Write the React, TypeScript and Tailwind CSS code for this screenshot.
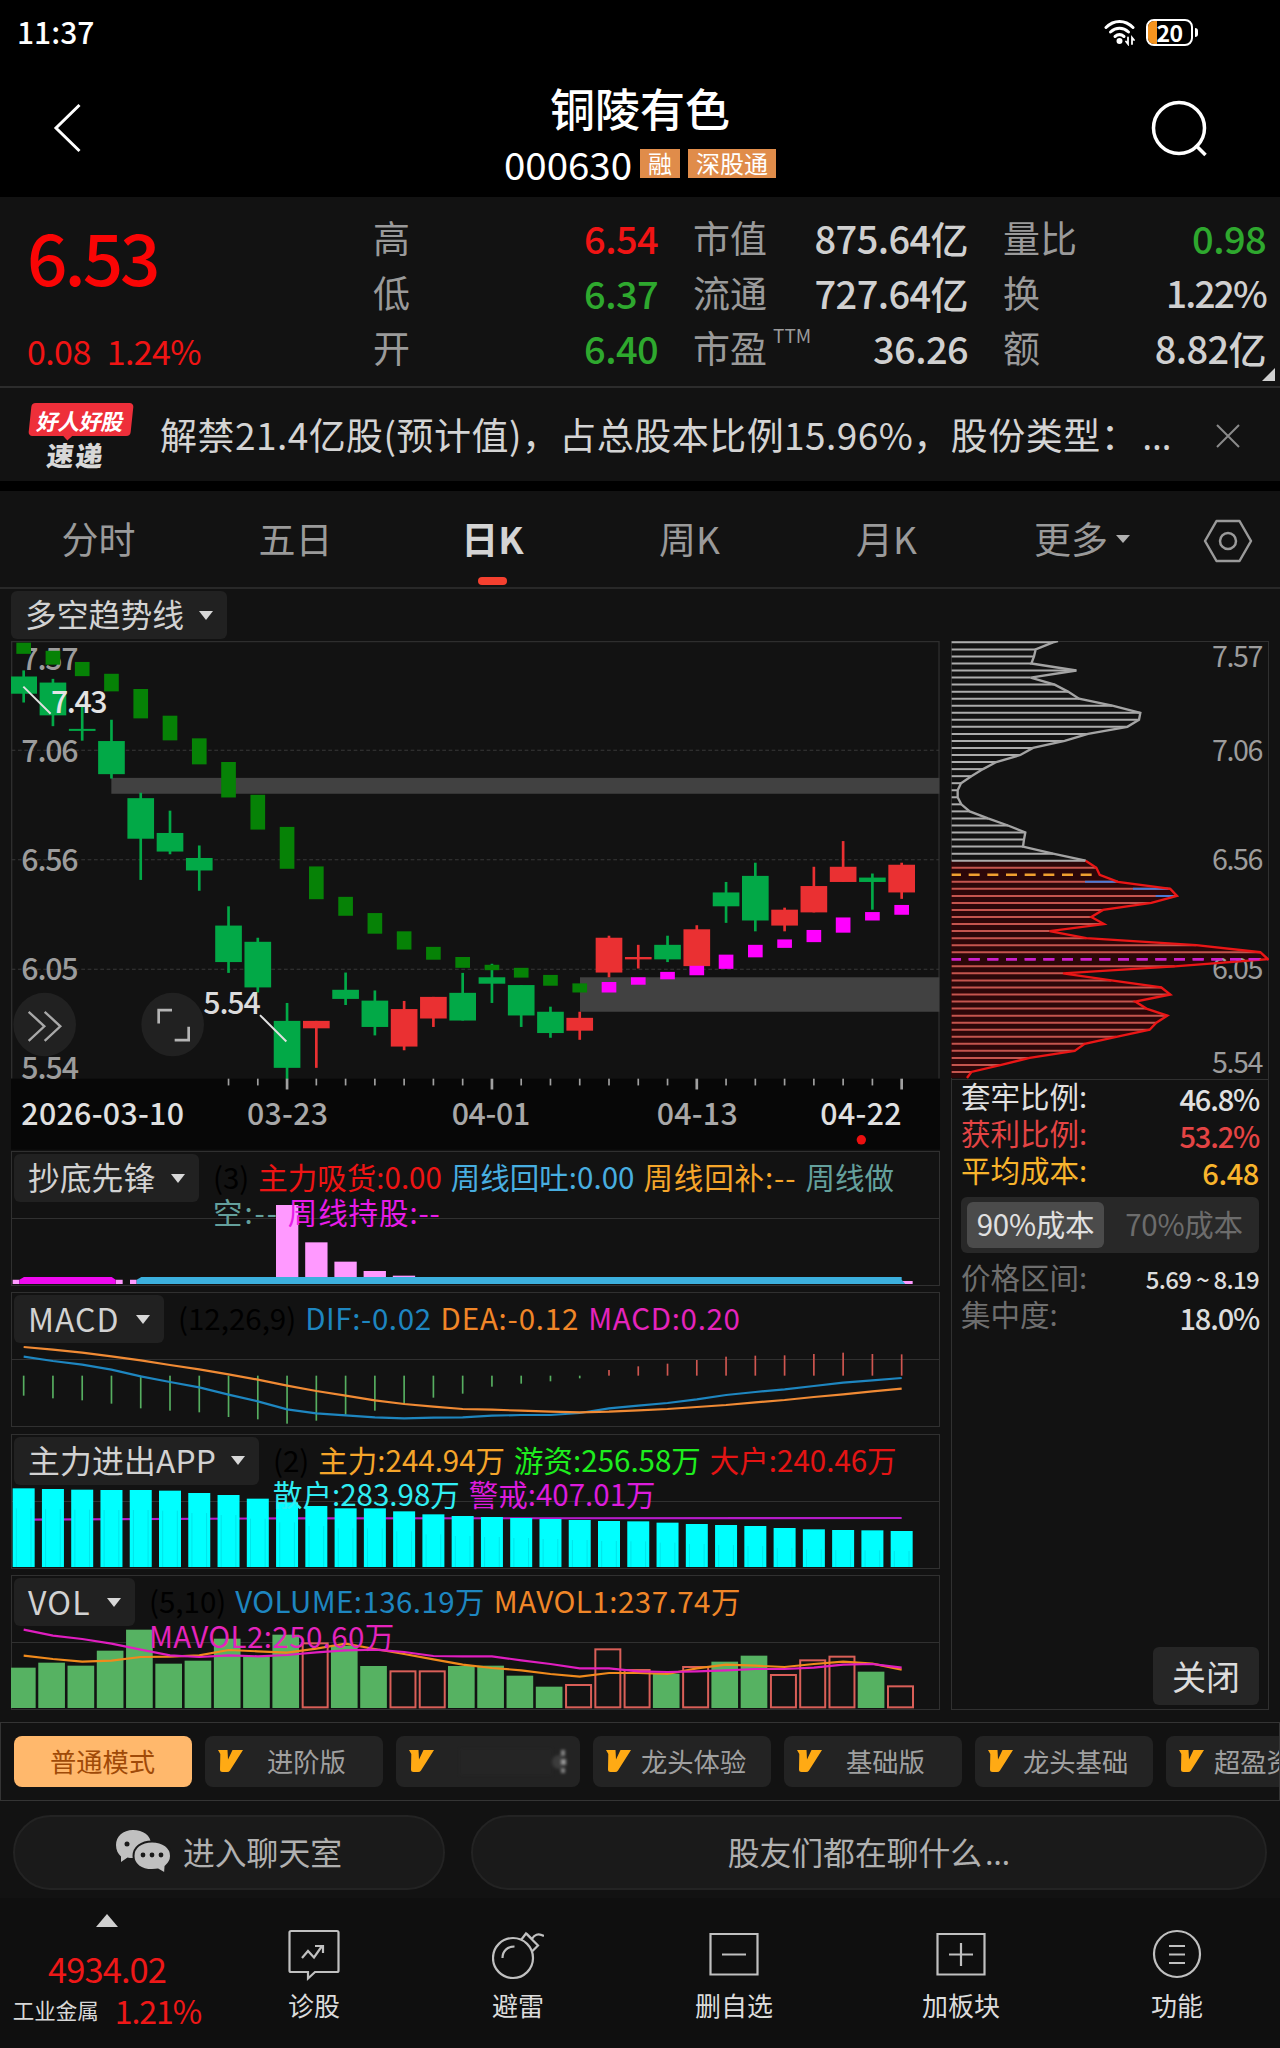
import React from 'react';
import clsx from 'clsx';

// All chart data below is in device units (about 3 units = 1 css pixel).
const COLS = 31;
const colX = (i: number) => 71 + i * 87.8;

type Candle = [string, number, number, number, number];

// [direction, high, body top, body bottom, low]
const CANDLES: Candle[] = [
  ['g', 120, 138, 189, 215],
  ['g', 145, 156, 253, 285],
  ['g', 220, 293, 299, 328],
  ['g', 266, 329, 427, 440],
  ['g', 482, 498, 618, 740],
  ['g', 535, 601, 656, 664],
  ['g', 638, 675, 712, 772],
  ['g', 818, 875, 983, 1015],
  ['g', 911, 923, 1058, 1073],
  ['g', 1104, 1157, 1296, 1330],
  ['r', 1157, 1157, 1179, 1296],
  ['g', 1014, 1065, 1092, 1110],
  ['g', 1067, 1097, 1175, 1200],
  ['r', 1098, 1122, 1233, 1244],
  ['r', 1086, 1086, 1150, 1175],
  ['g', 1015, 1074, 1156, 1156],
  ['g', 988, 1028, 1047, 1104],
  ['g', 1051, 1051, 1141, 1175],
  ['g', 1115, 1130, 1193, 1207],
  ['r', 1130, 1148, 1186, 1213],
  ['r', 905, 911, 1014, 1028],
  ['r', 932, 968, 975, 1002],
  ['g', 905, 932, 975, 983],
  ['r', 874, 886, 995, 995],
  ['g', 746, 777, 818, 867],
  ['g', 689, 728, 860, 892],
  ['r', 822, 828, 875, 892],
  ['r', 701, 758, 836, 836],
  ['r', 625, 701, 746, 746],
  ['g', 721, 733, 746, 828],
  ['r', 689, 695, 777, 796],
];

const TREND = [
  [38, 71], [62, 103], [95, 137], [130, 182], [175, 262], [254, 327], [321, 398], [391, 496],
  [488, 591], [583, 707], [700, 797], [790, 846], [838, 899], [892, 946], [938, 976], [968, 1000],
  [991, 1007], [1000, 1029], [1021, 1053], [1046, 1073], [1042, 1073], [1028, 1050], [1012, 1034],
  [994, 1022], [961, 1003], [932, 969], [916, 941], [888, 924], [851, 896], [835, 860], [814, 843],
];

const DIF = [651, 664, 675, 690, 710, 727, 743, 765, 785, 809, 821, 827, 833, 836, 834, 833, 828, 826, 826, 820, 806, 798, 790, 779, 766, 757, 749, 739, 729, 722, 715];
const DEA = [622, 630, 639, 650, 662, 676, 689, 704, 720, 738, 754, 768, 782, 793, 801, 808, 810, 813, 816, 818, 816, 812, 808, 802, 796, 788, 781, 772, 764, 755, 747];
const MACD = [768, 776, 782, 792, 806, 813, 818, 832, 839, 852, 843, 825, 813, 793, 774, 762, 741, 732, 725, 716, 691, 680, 672, 661, 651, 648, 647, 643, 639, 643, 644];
const FLOW = [205, 207, 209, 210, 210, 212, 219, 225, 236, 247, 258, 265, 265, 274, 283, 288, 291, 294, 297, 300, 303, 304, 308, 312, 315, 318, 324, 328, 330, 331, 333];
const VOLUME = [744, 729, 738, 693, 630, 732, 723, 657, 710, 645, 668, 678, 739, 752, 752, 739, 738, 768, 801, 793, 686, 748, 762, 739, 726, 708, 763, 719, 708, 756, 797];
const VOLUME_UP = [10, 13, 14, 19, 20, 21, 23, 26, 27, 28, 30];
const MAVOL1 = [708, 718, 726, 723, 712, 711, 707, 691, 695, 699, 687, 672, 688, 703, 719, 735, 745, 752, 763, 771, 760, 760, 763, 746, 735, 738, 742, 733, 726, 732, 750];
const MAVOL2 = [630, 648, 658, 672, 690, 707, 712, 707, 710, 706, 698, 692, 690, 697, 709, 710, 710, 722, 733, 746, 746, 755, 757, 755, 752, 748, 748, 744, 735, 733, 744];

const CHIPS = [
  370, 318, 313, 305, 440, 303, 375, 415, 448, 548, 632, 628, 593, 475, 405, 310, 272, 200, 160, 125, 94, 84,
  84, 95, 120, 175, 235, 287, 283, 280, 370, 468, 500, 510, 565, 722, 742, 665, 520, 485, 523, 360, 470, 800,
  992, 1015, 735, 400, 545, 695, 722, 617, 650, 713, 680, 660, 560, 465, 435, 300, 215, 125,
];
const chipY = (i: number) => 68 + i * 21.13;
const SPLIT = 31;

const toPoints = (ys: number[]) => ys.map((y, i) => `${colX(i).toFixed(1)},${y}`).join(' ');

function StatusBar() {
  return (
    <div className="flex h-16 shrink-0 items-center justify-between bg-black pl-[17px] pr-[82px] text-white">
      <span className="-mt-[2px] text-[30px] font-medium leading-[40px]">11:37</span>
      <div className="flex items-center gap-[9px]">
        <svg width="33" height="28" viewBox="0 0 33 28" fill="none" stroke="#fff" strokeWidth="3" strokeLinecap="round">
          <path d="M2 9.500C10 1.500 21 1.500 29 9.500" />
          <path d="M6.500 14C12 9 19 9 24.500 14" />
          <path d="M11 18.500c3-2.500 6-2.500 9 0" />
          <circle cx="15.500" cy="23" r="2" fill="#fff" strokeWidth="2" />
          <path d="M24 19.500v6.500l-2-2.500M28 26v-6.500l2 2.500" strokeWidth="1.800" />
        </svg>
        <div className="flex items-center gap-[2px]">
          <div className="relative flex h-[27px] w-[47px] items-center justify-center rounded-[8px] border-2 border-white">
            <div className="absolute inset-y-0 left-0 w-[9px] rounded-l-[6px] bg-[#f5941f]" />
            <span className="relative text-[23px] font-bold leading-[34px] tracking-tight">20</span>
          </div>
          <div className="h-[9px] w-[3px] rounded-r bg-white" />
        </div>
      </div>
    </div>
  );
}

function Header() {
  return (
    <div className="flex h-[133px] shrink-0 items-start justify-between bg-black text-white">
      <svg className="ml-[51px] mt-[38px]" width="32" height="52" viewBox="0 0 32 52" fill="none" stroke="#fff" strokeWidth="3">
        <path d="M28.500 3 5 26l23.500 23" />
      </svg>
      <div className="ml-[47px] flex flex-col items-center pt-[17px]">
        <h1 className="text-[45px] font-medium leading-[54px]">铜陵有色</h1>
        <div className="flex items-center gap-2">
          <span className="text-[38.500px] leading-[56px]">000630</span>
          <span className="h-[29px] bg-[#e08c4a] px-2 text-[24px] leading-[27px]">融</span>
          <span className="h-[29px] bg-[#e08c4a] px-2 text-[24px] leading-[27px]">深股通</span>
        </div>
      </div>
      <svg className="mr-[70px] mt-[35px]" width="60" height="60" viewBox="0 0 60 60" fill="none" stroke="#fff" strokeWidth="3.500">
        <circle cx="29" cy="29" r="25.500" />
        <path d="m45.500 46 10 10" />
      </svg>
    </div>
  );
}

const GREEN = 'text-[#2ea82e]';
const RED = 'text-[#f01414]';
const LIGHT = 'text-[#d0d0d0]';

function QuoteColumn({ className, rows }: { className: string; rows: [string, string, string][] }) {
  return (
    <div className={clsx('flex flex-col pt-[13px]', className)}>
      {rows.map(([label, value, color]) => (
        <div key={label} className="flex h-[55px] items-center justify-between">
          <span className="relative text-[37px] leading-none text-[#9a9a9a]">
            {label}
            {label === '市盈' && <sup className="absolute -top-[4px] left-full ml-[6px] text-[19px] leading-none">TTM</sup>}
          </span>
          <span className={clsx('font-medium leading-none', value.endsWith('%') ? 'text-[37px] tracking-[-1.800px]' : 'text-[38px] tracking-[-0.600px]', color)}>{value}</span>
        </div>
      ))}
    </div>
  );
}

function Quote() {
  return (
    <div className="relative flex h-[191px] shrink-0 border-b-2 border-[#2c2c2c]">
      <div className={clsx('w-[373px] pl-[27px]', RED)}>
        <div className="pt-[18px] text-[71px] font-medium leading-[80px] tracking-[-3px] text-[#fa0505]">6.53</div>
        <div className="flex gap-4 pt-[36px] text-[34px] leading-[40px] tracking-[-0.600px]">
          <span>0.08</span>
          <span>1.24%</span>
        </div>
      </div>
      <QuoteColumn className="w-[285px]" rows={[['高', '6.54', RED], ['低', '6.37', GREEN], ['开', '6.40', GREEN]]} />
      <QuoteColumn className="ml-[35px] w-[275px]" rows={[['市值', '875.64亿', LIGHT], ['流通', '727.64亿', LIGHT], ['市盈', '36.26', LIGHT]]} />
      <QuoteColumn className="ml-[35px] w-[263px]" rows={[['量比', '0.98', GREEN], ['换', '1.22%', LIGHT], ['额', '8.82亿', LIGHT]]} />
      <svg className="absolute bottom-[5px] right-[5px]" width="13" height="13" viewBox="0 0 13 13">
        <path d="M13 0v13H0z" fill="#d0d0d0" />
      </svg>
    </div>
  );
}

function News() {
  return (
    <div className="flex h-[93px] shrink-0 items-center">
      <div className="ml-[29px] mt-[2px] flex w-[104px] flex-col items-center">
        <div className="relative flex h-[33px] w-[102px] -skew-x-6 items-center justify-center rounded-[4px] bg-[#ee2f3a]">
          <span className="-skew-x-6 text-[22px] font-bold leading-none tracking-[-0.500px] text-white">好人好股</span>
          <span className="absolute -bottom-[3px] left-[36px] size-[7px] rotate-45 bg-[#ee2f3a]" />
        </div>
        <span className="-ml-[10px] mt-[5px] -skew-x-6 text-[27px] font-black leading-[28px] tracking-[2px] text-[#d8d8d8]">速递</span>
      </div>
      <p className="ml-[27px] w-[1018px] whitespace-nowrap text-[37px] leading-none tracking-[0.460px] text-[#d4d4d4]">
        解禁21.4亿股(预计值)，占总股本比例15.96%，股份类型：<span className="ml-[4px] font-['Noto_Sans'] tracking-normal">…</span>
      </p>
      <svg className="ml-[38px] mt-[2px]" width="24" height="24" viewBox="0 0 24 24" stroke="#8a8a8a" strokeWidth="2">
        <path d="m1 1 22 22M23 1 1 23" />
      </svg>
    </div>
  );
}

const TABS = ['分时', '五日', '日K', '周K', '月K'];

function Tabs() {
  return (
    <div className="flex h-[98px] shrink-0 items-stretch border-b-2 border-[#282828] text-[37px] text-[#9a9a9a]">
      {TABS.map((tab) => (
        <div key={tab} className={clsx('relative flex w-[197px] items-center justify-center pb-px', tab === '日K' && 'font-bold text-[#d4d4d4]')}>
          {tab}
          {tab === '日K' && <span className="absolute bottom-[2px] h-[8px] w-[29px] rounded-full bg-[#f5402f]" />}
        </div>
      ))}
      <div className="flex w-[194px] items-center justify-center gap-[8px] pb-px">
        更多
        <svg width="14" height="8" viewBox="0 0 14 8"><path d="M0 0h14L7 8z" fill="#b0b0b0" /></svg>
      </div>
      <div className="flex flex-1 items-center justify-center pr-[3px]">
        <svg className="mt-[3px]" width="50" height="44" viewBox="0 0 50 44" fill="none" stroke="#9a9a9a" strokeWidth="2.500" strokeLinejoin="round">
          <path d="M13.500 2h23L48 22 36.500 42h-23L2 22z" />
          <circle cx="25" cy="22" r="8" />
        </svg>
      </div>
    </div>
  );
}

function Dropdown({ label, className }: { label: string; className: string }) {
  return (
    <div className={clsx('flex h-[48px] shrink-0 items-center justify-between rounded-[6px] bg-[#212121] pl-[14px] pr-[14px] leading-none text-[#d2d2d2]', className)}>
      <span className="-mt-[2px] whitespace-nowrap">{label}</span>
      <svg width="14" height="9" viewBox="0 0 14 9"><path d="M0 0h14L7 9z" fill="#d8d8d8" /></svg>
    </div>
  );
}

function KLine() {
  const label = { fontSize: 91, fill: '#9c9c9c', fontWeight: 500 };
  return (
    <svg className="block h-[510px] w-[929px] shrink-0" viewBox="33 33 2787 1509" preserveAspectRatio="none">
      <path d="M35 1328V35H2817V1328" fill="none" stroke="#2e2e2e" strokeWidth="4" />
      <rect x="33" y="1328" width="2787" height="210" fill="#070707" />
      {[356, 680, 1004].map((y) => (
        <path key={y} d={`M35 ${y}H2817`} stroke="#383838" strokeWidth="3" strokeDasharray="11 8" />
      ))}
      <rect x="334" y="438" width="2484" height="47" fill="#414141" />
      <rect x="1740" y="1028" width="1078" height="102" fill="#414141" />
      <text x="64" y="118" textLength="172" {...label}>7.57</text>
      <text x="64" y="390" textLength="172" {...label}>7.06</text>
      <text x="64" y="713" textLength="172" {...label}>6.56</text>
      <text x="64" y="1037" textLength="172" {...label}>6.05</text>
      {CANDLES.map(([dir, high, top, bottom, low], i) => (
        <g key={i} fill={dir === 'g' ? '#02a947' : '#ea3032'}>
          <rect x={colX(i) - 4} y={high} width="8" height={low - high} />
          <rect x={colX(i) - 40} y={top} width="80" height={bottom - top} />
        </g>
      ))}
      {TREND.map(([top, bottom], i) => (
        <rect key={i} x={colX(i) - 22} y={top} width="44" height={bottom - top} fill={i < 20 ? '#068206' : '#ff00ff'} />
      ))}
      <path d="M70 168 152 248M780 1140l79 78" stroke="#e0e0e0" strokeWidth="6" />
      <text x="153" y="247" textLength="170" fontSize="91" fontWeight="500" fill="#e4e4e4">7.43</text>
      <text x="610" y="1138" textLength="172" fontSize="91" fontWeight="500" fill="#dcdcdc">5.54</text>
      <circle cx="134" cy="1168" r="94" fill="#212121" />
      <circle cx="518" cy="1168" r="94" fill="#212121" />
      <path d="m86 1130 47 43-47 43M134 1130l47 43-47 43" fill="none" stroke="#a8a8a8" strokeWidth="7" />
      <path d="M476 1165v-40h40M566 1174v40h-42" fill="none" stroke="#b4b4b4" strokeWidth="8" />
      <text x="64" y="1328" textLength="173" {...label}>5.54</text>
      {Array.from({ length: COLS - 7 }, (_, k) => k + 7).map((i) => {
        const major = (i - 9) % 7 === 0;
        return <rect key={i} x={colX(i) - (major ? 4 : 2.5)} y="1328" width={major ? 8 : 5} height={major ? 32 : 20} fill="#a0a0a0" />;
      })}
      <g fontSize="91" fontWeight="500" fill="#a8a8a8">
        <text x="64" y="1465" textLength="488" fill="#e0e0e0">2026-03-10</text>
        <text x="741" y="1465" textLength="243">03-23</text>
        <text x="1355" y="1465" textLength="236">04-01</text>
        <text x="1970" y="1465" textLength="243">04-13</text>
        <text x="2461" y="1465" textLength="244" fill="#e0e0e0">04-22</text>
      </g>
      <circle cx="2584" cy="1509" r="14" fill="#ec1010" />
    </svg>
  );
}

type Segment = [string, string];

interface PanelProps {
  label: string;
  chip: string;
  lines: Segment[][];
  viewBox: string;
  children: React.ReactNode;
}

function Panel({ label, chip, lines, viewBox, children }: PanelProps) {
  return (
    <div className="relative h-[135px] w-[929px] shrink-0 border border-[#303030]">
      <div className="absolute inset-x-0 top-[66px] h-px bg-[#303030]" />
      <svg className="absolute -left-px -top-px h-[135px] w-[929px]" viewBox={viewBox}>{children}</svg>
      <div className="relative flex pl-[2px] pt-[2px]">
        <Dropdown label={label} className={chip} />
        <div className="ml-[14px] pt-[5px] text-[29.500px] leading-[34.500px]">
          {lines.map((segments, i) => (
            <div key={i} className="flex gap-[9px] whitespace-nowrap">
              {segments.map(([text, color]) => (
                <span key={text} className={color}>{text}</span>
              ))}
            </div>
          ))}
        </div>
      </div>
    </div>
  );
}

function Indicators() {
  return (
    <div className="flex flex-col gap-[6.400px]">
      <Panel
        label="抄底先锋"
        chip="w-[185px] text-[31.800px]"
        viewBox="33 33 2787 405"
        lines={[
          [['(3)', 'text-black'], ['主力吸货:0.00', 'text-[#ee1414]'], ['周线回吐:0.00', 'text-[#48aee0]'], ['周线回补:--', 'text-[#f5a52a] tracking-[0.900px]'], ['周线做', 'text-[#64a09c]']],
          [['空:--', 'text-[#64a09c] tracking-[1.900px]'], ['周线持股:--', 'text-[#e81ce8] tracking-[0.900px]']],
        ]}
      >
        {[195, 307, 365, 393, 407].map((y, i) => (
          <rect key={y} x={828 + i * 87.6} y={y} width="67" height={415 - y} fill="#ff99ff" />
        ))}
        <path d="M38 419H58V432H38zM347 419h21v13h-21zM390 419h20v13h-20zM2705 423h33v9h-33z" fill="#ff99ff" />
        <path d="M58 419 72 411H335L347 419V432H58z" fill="#f00af0" />
        <path d="M410 419 424 411H2705V419L2716 432H410z" fill="#3cb0de" />
      </Panel>
      <Panel
        label="MACD"
        chip="w-[150px] text-[32px] tracking-[1px]"
        viewBox="33 457 2787 405"
        lines={[
          [['(12,26,9)', 'text-black'], ['DIF:-0.02', 'text-[#1e86c0] tracking-[0.600px]'], ['DEA:-0.12', 'text-[#f08628] tracking-[0.800px]'], ['MACD:0.20', 'text-[#e424bc] tracking-[0.700px]']],
        ]}
      >
        {MACD.map((y, i) => (
          <rect key={i} x={colX(i) - 2.5} y={Math.min(y, 708)} width="5" height={Math.abs(y - 708)} fill={y > 708 ? '#56ae60' : '#cf5650'} />
        ))}
        <polyline points={toPoints(DIF)} fill="none" stroke="#1e86c0" strokeWidth="6.500" />
        <polyline points={toPoints(DEA)} fill="none" stroke="#f08a34" strokeWidth="6.500" />
      </Panel>
      <Panel
        label="主力进出APP"
        chip="w-[245px] text-[31.800px] tracking-[0.200px]"
        viewBox="33 42 2787 405"
        lines={[
          [['(2)', 'text-black'], ['主力:244.94万', 'text-[#f5a52a]'], ['游资:256.58万', 'text-[#1eee1e]'], ['大户:240.46万', 'text-[#e41414]']],
          [['散户:283.98万', 'text-[#30eef4]'], ['警戒:407.01万', 'text-[#dc1cdc]']],
        ]}
      >
        <path d="M71 299 861 295 2705 294" fill="none" stroke="#b41cc8" strokeWidth="6.500" />
        {FLOW.map((y, i) => (
          <g key={i}>
            <rect x={colX(i) - 33} y={y} width="66" height={441 - y} fill="#00ffff" />
            <path d={`M${colX(i) - 22} ${y + 60}V441M${colX(i) + 22} ${y + 60}V441`} stroke="#00d8e0" strokeWidth="2" />
          </g>
        ))}
      </Panel>
      <Panel
        label="VOL"
        chip="w-[121px] text-[32px] tracking-[1.200px]"
        viewBox="33 466 2787 405"
        lines={[
          [['(5,10)', 'text-black'], ['VOLUME:136.19万', 'text-[#1e86c0] tracking-[0.400px]'], ['MAVOL1:237.74万', 'text-[#f08628] tracking-[0.500px]']],
          [['MAVOL2:250.60万', 'text-[#e424bc] tracking-[0.400px]']],
        ]}
      >
        {VOLUME.map((y, i) =>
          VOLUME_UP.includes(i) ? (
            <rect key={i} x={colX(i) - 41} y={y + 3} width="75" height={860 - y} fill="none" stroke="#d95f58" strokeWidth="6" />
          ) : (
            <rect key={i} x={colX(i) - 44} y={y} width="80" height={865 - y} fill="#56b262" />
          ),
        )}
        <polyline points={toPoints(MAVOL1)} fill="none" stroke="#f08a1c" strokeWidth="6.500" />
        <polyline points={toPoints(MAVOL2)} fill="none" stroke="#e01ec0" strokeWidth="6.500" />
      </Panel>
    </div>
  );
}

function ChipProfile() {
  const points = CHIPS.map((x, i) => `${x},${chipY(i).toFixed(1)}`);
  const upper = `385,64 ${points.slice(0, SPLIT + 1).join(' ')}`;
  const lower = `${points.slice(SPLIT).join(' ')} 112,1375`;
  return (
    <svg className="block h-[438px] w-[318px] shrink-0" viewBox="64 64 954 1314">
      <polygon points={`64,${chipY(SPLIT)} ${lower} 64,1375`} fill="#2c0709" />
      {CHIPS.map((x, i) => (
        <path
          key={i}
          d={`M66 ${chipY(i)}H${x}`}
          stroke={i === 33 ? '#f0a030' : i === 45 ? '#cc20cc' : i <= SPLIT ? '#acacac' : '#c4554e'}
          strokeWidth={i === 33 || i === 45 ? 8 : 6}
          strokeDasharray={i === 33 || i === 45 ? '33 23' : undefined}
          strokeDashoffset={i === 33 || i === 45 ? 5 : undefined}
        />
      ))}
      <path d={`M466 ${chipY(34)}H558M610 ${chipY(35)}H715M678 ${chipY(36)}H730`} stroke="#4a7ad4" strokeWidth="6" />
      <polyline points={upper} fill="none" stroke="#a4a4a4" strokeWidth="7" />
      <g fontSize="86" fill="#9c9c9c">
        <text x="847" y="142" textLength="154">7.57</text>
        <text x="847" y="423" textLength="154">7.06</text>
        <text x="847" y="752" textLength="154">6.56</text>
        <text x="847" y="1078" textLength="154">6.05</text>
        <text x="847" y="1359" textLength="154">5.54</text>
      </g>
      <polyline points={lower} fill="none" stroke="#ea1616" strokeWidth="7" />
      <path d={`M66 ${chipY(45)}H1010`} stroke="#cc20cc" strokeWidth="8" strokeDasharray="33 23" strokeDashoffset="5" />
    </svg>
  );
}

const COSTS: Segment[] = [['套牢比例:', '46.8%'], ['获利比例:', '53.2%'], ['平均成本:', '6.48']];
const COST_COLORS = ['text-[#e0e0e0]', 'text-[#e44444]', 'text-[#f8b42c]'];

function ChipPanel() {
  return (
    <div className="mt-[52px] flex h-[1069px] w-[318px] flex-col border border-[#303030]">
      <div className="-mx-px -mt-px border-b border-[#303030]"><ChipProfile /></div>
      <div className="flex flex-1 flex-col px-[9px]">
        {COSTS.map(([label, value], i) => (
          <div key={label} className={clsx('flex h-[37px] items-center justify-between leading-none', COST_COLORS[i])}>
            <span className="-mt-[5px] text-[29.500px]">{label}</span>
            <span className={clsx('text-[29px] font-medium', value.endsWith('%') ? 'tracking-[-1.200px]' : 'tracking-[-0.400px]')}>{value}</span>
          </div>
        ))}
        <div className="mt-[6px] flex h-[56px] w-[298px] items-center rounded-[6px] bg-[#282828] px-[6px] text-[29.500px] leading-none tracking-[-0.300px]">
          <div className="flex h-[46px] w-[137px] items-center justify-center rounded-[6px] bg-[#4b4b4b] pb-[3px] text-[#e0e0e0]">90%成本</div>
          <div className="flex flex-1 items-center justify-center pb-[3px] pl-[11px] text-[#6c6c6c]">70%成本</div>
        </div>
        <div className="mt-[7px] flex h-[37px] items-center justify-between leading-none">
          <span className="-mt-[3px] text-[29.500px] text-[#6e6e6e]">价格区间:</span>
          <span className="text-[24px] font-medium tracking-[-0.700px] text-[#dcdcdc]">5.69 ~ 8.19</span>
        </div>
        <div className="flex h-[37px] items-center justify-between leading-none">
          <span className="-mt-[3px] text-[29.500px] text-[#6e6e6e]">集中度:</span>
          <span className="mt-[3px] text-[29px] font-medium tracking-[-1.200px] text-[#dcdcdc]">18.0%</span>
        </div>
        <button className="mb-[4px] ml-auto mt-auto flex h-[58px] w-[106px] items-center justify-center rounded-[6px] bg-[#262626] pb-px text-[34px] leading-none text-[#dcdcdc]">
          关闭
        </button>
      </div>
    </div>
  );
}

const MODES = ['进阶版', '', '龙头体验', '基础版', '龙头基础', '超盈资金'];

function Modes() {
  return (
    <div className="mt-[12px] flex h-[79px] shrink-0 items-center gap-[13.500px] overflow-hidden border border-[#343434] pl-[12.500px] text-[26.300px] leading-none">
      <div className="flex h-[51px] w-[178px] shrink-0 items-center justify-center rounded-[8px] bg-[#ffb86c] pb-px text-[#a04a08]">普通模式</div>
      {MODES.map((mode) => (
        <div key={mode} className={clsx('flex h-[51px] shrink-0 items-center rounded-[8px] bg-[#232323] pl-[13px] text-[#a0a0a0]', mode ? 'w-[177.500px]' : 'w-[183.500px]')}>
          <svg className="-mt-[2px] shrink-0" width="25" height="22" viewBox="0 0 25 22">
            <path d="M0 0h9.500l.5 9.500L14.500 0H25L12 20.500q-1 1.500-3 1.500H4.500Q2 22 2 19.500L2.300 4Z" fill="#ffaa14" />
          </svg>
          {mode ? (
            <span className={clsx('whitespace-nowrap pb-px', mode.length > 3 ? 'ml-[10px]' : 'ml-[24px]')}>{mode}</span>
          ) : (
            <div className="ml-auto mr-[14px] flex items-center blur-[1.500px]">
              <div className="h-[26px] w-[92px] bg-[#252525]" />
              <div className="h-[14px] w-[9px] rounded-l-full bg-[#3c3c3c]" />
              <div className="flex flex-col gap-[3px]">
                <div className="h-[6px] w-[4px] bg-[#888]" />
                <div className="h-[6px] w-[5px] bg-[#999]" />
                <div className="h-[5px] w-[4px] bg-[#888]" />
              </div>
            </div>
          )}
        </div>
      ))}
    </div>
  );
}

function Chat() {
  const pill = 'flex h-[75px] items-center justify-center rounded-full border-2 border-[#232323] bg-[#1a1a1a] text-[31.800px] leading-none text-[#b0b0b0]';
  return (
    <div className="flex shrink-0 gap-[26px] px-[13px] pb-[8px] pt-[14px]">
      <div className={clsx(pill, 'w-[432px] gap-[12px]')}>
        <svg className="-mt-px" width="55" height="44" viewBox="0 0 55 44" fill="#c0c0c0">
          <path d="M17 0C7 0 0 6.500 0 15c0 5 2 9 5 11.500L5 32l6.500-4.500C13 28 15 28 17 28c10 0 18-5.500 18-14S27 0 17 0z" />
          <path d="M36 11.500c-11 0-18.500 6-18.500 14.500S25 40 36 40c2 0 4 0 6-.500l7 4 .500-7c3.500-3 5.500-6.500 5.500-10.500 0-8.500-8-14.500-19-14.500z" stroke="#1a1a1a" strokeWidth="2" />
          <g fill="#1a1a1a">
            <circle cx="11" cy="14" r="2.500" />
            <circle cx="27" cy="25" r="2.400" />
            <circle cx="36" cy="25" r="2.400" />
            <circle cx="45" cy="25" r="2.400" />
          </g>
        </svg>
        <span className="-mt-px">进入聊天室</span>
      </div>
      <div className={clsx(pill, 'w-[796px]')}>
        <span className="-mt-px">股友们都在聊什么<span className="ml-[3px] font-['Noto_Sans']">…</span></span>
      </div>
    </div>
  );
}

const NAV = [
  {
    label: '诊股',
    width: 'w-[204px]',
    icon: (
      <>
        <path d="M3 2h46a1.500 1.500 0 0 1 1.500 1.500v38A1.500 1.500 0 0 1 49 43H27l-7 6.500V43H3a1.500 1.500 0 0 1-1.500-1.500v-38A1.500 1.500 0 0 1 3 2z" />
        <path d="m14 29 6-7 6 6.500L34 17M27 17h8v7" />
      </>
    ),
  },
  {
    label: '避雷',
    width: 'w-[204px]',
    icon: (
      <>
        <circle cx="21" cy="29" r="20" />
        <path d="M10.500 29c0-7 5-11.500 12-11.500M29 11l5-6.500 12 12-6 6M34.500 4.500 40 10c2-4 6-6.500 12-3" />
      </>
    ),
  },
  {
    label: '删自选',
    width: 'w-[228px]',
    icon: <path d="M2.500 5h47v40.500h-47zM14 25.500h24" />,
  },
  {
    label: '加板块',
    width: 'w-[226px]',
    icon: <path d="M2.500 5h47v40.500h-47zM14 25.500h24M26 14v23" />,
  },
  {
    label: '功能',
    width: 'w-[206px]',
    icon: (
      <>
        <circle cx="26" cy="25" r="23" />
        <path d="M18 17h16M18 25.500h16M18 34h16" />
      </>
    ),
  },
];

function BottomNav() {
  return (
    <div className="flex flex-1 bg-[#0f0f0f]">
      <div className="flex w-[214px] flex-col items-center text-[#ee1818]">
        <svg className="mt-[16px]" width="22" height="13" viewBox="0 0 22 13"><path d="M11 0l11 13H0z" fill="#d0d0d0" /></svg>
        <span className="mt-[18px] text-[34.500px] leading-[46px] tracking-[-0.900px]">4934.02</span>
        <div className="flex items-center gap-[16px]">
          <span className="text-[21.500px] leading-none text-[#d8d8d8]">工业金属</span>
          <span className="text-[32px] leading-[38px] tracking-[-1px]">1.21%</span>
        </div>
      </div>
      {NAV.map(({ label, width, icon }, i) => (
        <div key={label} className={clsx('flex flex-col items-center pt-[31px]', width, i === 0 && '-ml-[2px]')}>
          <svg width="52" height="52" viewBox="0 0 52 52" fill="none" stroke="#c0c0c0" strokeWidth="2.200">{icon}</svg>
          <span className="mt-[6px] text-[26px] leading-[36px] text-[#dcdcdc]">{label}</span>
        </div>
      ))}
    </div>
  );
}

export default function App() {
  return (
    <div className="flex h-[2048px] w-[1280px] flex-col overflow-hidden bg-[#121212] font-['Noto_Sans_CJK_SC',sans-serif]">
      <StatusBar />
      <Header />
      <Quote />
      <News />
      <div className="h-[10px] shrink-0 bg-black" />
      <Tabs />
      <div className="flex shrink-0 gap-[11px] pl-[11px]">
        <div className="flex w-[929px] flex-col">
          <div className="h-[52px] pt-[2px]">
            <Dropdown label="多空趋势线" className="w-[216px] text-[31.800px]" />
          </div>
          <KLine />
          <Indicators />
        </div>
        <ChipPanel />
      </div>
      <Modes />
      <Chat />
      <BottomNav />
    </div>
  );
}
